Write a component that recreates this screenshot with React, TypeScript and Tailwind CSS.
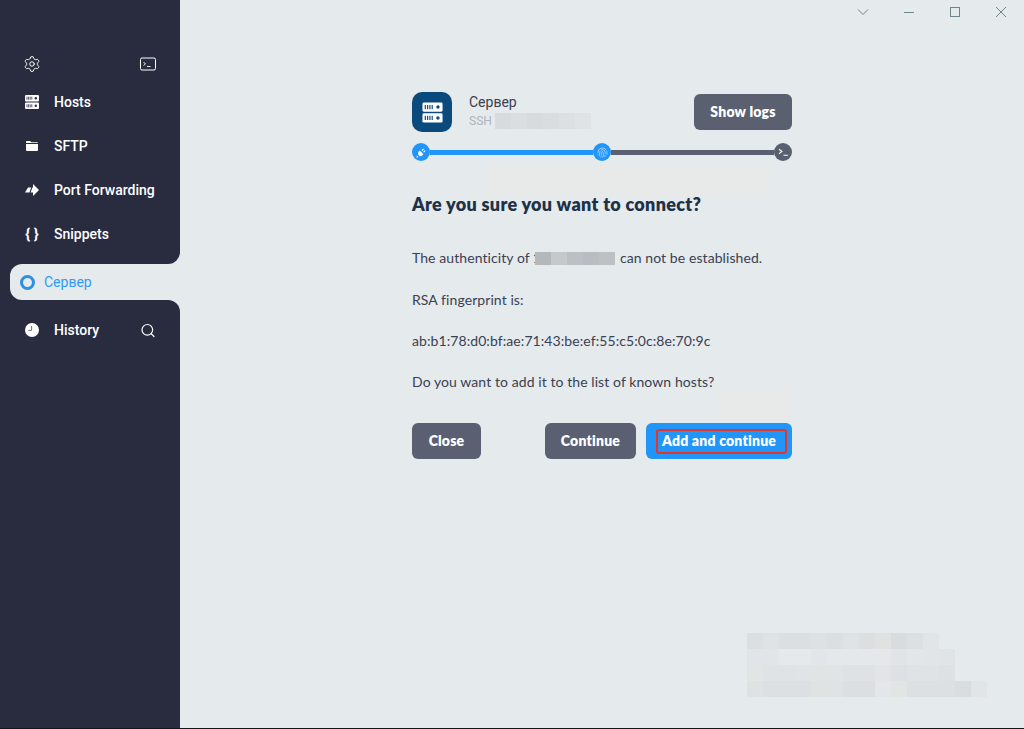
import { Fingerprint, Search, Settings } from "lucide-react";
import type { ReactNode } from "react";

const SIDEBAR_FONT = "font-['Roboto',sans-serif]";
const MAIN_FONT = "font-['Lato','Noto_Sans',sans-serif]";

// colours of the pixelated smudge in the lower right corner, one row per line
const smudge = [
  ["#dcdfe2", "#e0e3e5", "#dcdfe2", "#dcdfe2", "#dee1e3", "#dcdfe2", "#e0e3e5", "#dcdfdf", "#dfe2e1", "#d9dcdf", "#dde0e3", "#e2e5e8"],
  ["#e2e5e7", "#e2e5e7", "#e5e9eb", "#e5e9eb", "#e3e6e8", "#e5e8ea", "#e5e8ea", "#e5e8ea", "#e5e8ea", "#e1e4e6", "#e3e6e8", "#e2e5e7", "#e0e4e6"],
  ["#e1e5e3", "#e0e3e5", "#e0e3e5", "#e1e4e6", "#e1e4e5", "#e1e4e5", "#dfe2e4", "#dfe2e4", "#e2e4e5", "#dee1e3", "#e0e3e5", "#e0e3e5", "#dde1e4"],
  ["#dee2e2", "#dde0e2", "#dde0e2", "#dde0e2", "#dfe3e2", "#e0e3e4", "#dcdfe1", "#dcdfe2", "#e4e7e9", "#e1e6e4", "#dde0e2", "#dde0e2", "#dde0e2", "#dadde0", "#e2e5e8"],
];

// blurred address next to SSH and in the first paragraph
const hostBlur = ["#d8dbde", "#dbdee1", "#d8dbde", "#dadde0", "#dde0e3", "#e0e3e6"];
const addressBlur = ["#b4b7bb", "#c6c9cc", "#bcbfc3", "#b9bcc0", "#bec1c4"];

function ServerIcon({ size, fill, hole }: { size: number; fill: string; hole: string }) {
  return (
    <svg width={size} height={size} viewBox="0 0 16 16">
      <rect x="1" y="1" width="14" height="6.4" rx="1" fill={fill} />
      <rect x="1" y="8.6" width="14" height="6.4" rx="1" fill={fill} />
      <path d="M3 2.7v3M4.6 2.7v3M6.2 2.7v3M7.8 2.7v3M3 10.3v3M4.6 10.3v3M6.2 10.3v3M7.8 10.3v3" stroke={hole} strokeWidth="0.8" />
      <circle cx="11.8" cy="4.2" r="1.2" fill={hole} />
      <circle cx="11.8" cy="11.8" r="1.2" fill={hole} />
    </svg>
  );
}

function FolderIcon() {
  return (
    <svg width="12" height="10" viewBox="0 0 12 10" fill="white">
      <path d="M.8 0h3.4l1.2 1.3h5.8c.4 0 .8.3.8.8H0V.8C0 .4.4 0 .8 0z" />
      <path d="M0 3h12v6.2c0 .4-.4.8-.8.8H.8c-.4 0-.8-.4-.8-.8z" />
    </svg>
  );
}

function ForwardIcon() {
  return (
    <svg width="14" height="12" viewBox="0 0 14 12" fill="white">
      <path d="M8 0 14 6l-6 6V8.6H5.6L7.4 3.4H8z" />
      <path d="M3 3.4h3.2L4.4 8.6H0z" />
    </svg>
  );
}

function ClockIcon() {
  return (
    <svg width="14" height="14" viewBox="0 0 14 14">
      <circle cx="7" cy="7" r="7" fill="white" />
      <path d="M6.6 3v4.4H3.4" fill="none" stroke="#6d7080" strokeWidth="1" />
    </svg>
  );
}

function TerminalBox() {
  return (
    <svg width="16" height="14" viewBox="0 0 16 14" fill="none" stroke="white">
      <rect x="0.5" y="1" width="15" height="12" rx="1.5" strokeWidth="1" />
      <path d="M3.5 5 5.5 7l-2 1.5M7 9.5h3.5" strokeWidth="0.9" />
    </svg>
  );
}

function PlugIcon() {
  return (
    <svg width="11" height="11" viewBox="0 0 10 10" fill="white">
      <path d="M3.4 3.2 6.8 6.6 5.6 7.8C4.7 8.6 3.4 8.6 2.6 7.6 1.6 6.8 1.6 5.4 2.4 4.4z" />
      <path d="M1.8 8.2.6 9.4M5.4 3.2 6.8 1.8M6.9 4.7 8.3 3.3" stroke="white" strokeWidth="1" />
    </svg>
  );
}

function NavItem({ icon, label, right }: { icon: ReactNode; label: string; right?: ReactNode }) {
  return (
    <div className="flex h-11 items-center pl-[24px] text-sm font-medium text-white">
      <span className="mr-[14px] flex w-4 shrink-0 items-center justify-center">{icon}</span>
      <span className="flex-1">{label}</span>
      {right && <span className="mr-[24px] flex w-4 justify-center">{right}</span>}
    </div>
  );
}

function Sidebar() {
  return (
    <aside className={`flex w-[180px] shrink-0 flex-col ${SIDEBAR_FONT}`}>
      <div className="flex h-[264px] flex-col rounded-br-xl bg-[#292c3f] pt-[55px]">
        <div className="mb-[7px] flex items-center justify-between px-[23px]">
          <Settings size={18} strokeWidth={1.3} className="text-white" />
          <span className="mr-px">
            <TerminalBox />
          </span>
        </div>
        <NavItem icon={<ServerIcon size={16} fill="white" hole="#292c3f" />} label="Hosts" />
        <NavItem icon={<FolderIcon />} label="SFTP" />
        <NavItem icon={<ForwardIcon />} label="Port Forwarding" />
        <NavItem icon={<span className="text-[15px] leading-none font-bold whitespace-nowrap">{"{ }"}</span>} label="Snippets" />
      </div>
      <div className="bg-[#292c3f] pl-[10px]">
        <div className="flex h-9 items-center rounded-l-xl bg-[#e5eaed] pl-[10px] text-sm text-[#2e9bf5]">
          <span className="h-[15px] w-[15px] rounded-full border-[3px] border-[#2f8fe0]" />
          <span className="ml-[9px]">Сервер</span>
        </div>
      </div>
      <div className="flex-1 rounded-tr-xl bg-[#292c3f] pt-[8px]">
        <NavItem icon={<ClockIcon />} label="History" right={<Search size={17} strokeWidth={1.8} className="text-white" />} />
      </div>
    </aside>
  );
}

function WindowControls() {
  return (
    <div className="flex h-6 items-center justify-end pr-[17px] text-[#71858f]">
      <svg width="12" height="8" viewBox="0 0 12 8" fill="none" stroke="currentColor" className="mr-[35px]">
        <path d="M1 1.5 6 6.5l5-5" />
      </svg>
      <span className="mr-[36px] h-px w-[10px] bg-current" />
      <span className="mr-[35px] h-[10px] w-[10px] border border-current" />
      <svg width="12" height="12" viewBox="0 0 12 12" stroke="currentColor" fill="none">
        <path d="M1 1l10 10M11 1 1 11" />
      </svg>
    </div>
  );
}

function Blur({ colors, cell, height }: { colors: string[]; cell: number; height: number }) {
  return (
    <span className="inline-flex align-middle">
      {colors.map((c, i) => (
        <span key={i} style={{ background: c, width: cell, height }} />
      ))}
    </span>
  );
}

function Step({ children, done }: { children: ReactNode; done: boolean }) {
  return (
    <span className={`flex h-[18px] w-[18px] shrink-0 items-center justify-center rounded-full ${done ? "bg-[#2196f8]" : "bg-[#5a5f72]"}`}>
      {children}
    </span>
  );
}

function Button({ children, className }: { children: ReactNode; className: string }) {
  return (
    <button className={`flex h-9 items-center justify-center rounded-md text-sm font-extrabold tracking-[0.2px] text-white ${className}`}>
      {children}
    </button>
  );
}

function Dialog() {
  return (
    <div className={`relative mx-auto w-[380px] pt-[68px] text-sm tracking-[0.08px] text-[#3a3f52] ${MAIN_FONT}`}>
      <div className="flex h-10 items-start">
        <span className="flex h-10 w-10 items-center justify-center rounded-[10px] bg-[#0b4a7c]">
          <ServerIcon size={23} fill="white" hole="#0b4a7c" />
        </span>
        <div className={`ml-[17px] flex-1 tracking-normal ${SIDEBAR_FONT}`}>
          <div className="text-sm leading-5">Сервер</div>
          <div className="mt-px flex h-4 items-center text-xs text-[#aeb3bf]">
            SSH
            <span className="ml-[3px] flex">
              <Blur colors={hostBlur} cell={16} height={16} />
            </span>
          </div>
        </div>
        <Button className="w-[98px] self-center bg-[#5a6070]">Show logs</Button>
      </div>

      <div className="mt-[11px] flex items-center">
        <Step done>
          <PlugIcon />
        </Step>
        <span className="h-[5px] flex-1 bg-[#2196f8]" />
        <Step done>
          <Fingerprint size={11} strokeWidth={1.5} className="text-[#cfe6fb]" />
        </Step>
        <span className="h-[5px] flex-1 bg-[#5a5f72]" />
        <Step done={false}>
          <svg width="11" height="9" viewBox="0 0 10 8" fill="none" stroke="white" strokeWidth="1.1">
            <path d="M1 1l2.5 2L1 5M5 6.5h4" />
          </svg>
        </Step>
      </div>

      <h1 className="mt-[29px] text-lg leading-7 font-extrabold tracking-[0.3px] text-[#1d3147]">Are you sure you want to connect?</h1>

      <p className="mt-[28px] flex h-6 items-center whitespace-nowrap">
        The authenticity of
        <span className="mr-[5px] ml-[3px] flex items-center">
          <span className="text-sm leading-none">1</span>
          {/* the mosaic covers most of the first digit */}
          <span className="relative -ml-[6px] flex">
            <Blur colors={addressBlur} cell={16} height={13} />
          </span>
        </span>
        can not be established.
      </p>
      <p className="mt-[18px] h-6 leading-6">RSA fingerprint is:</p>
      <p className="mt-[17px] h-6 leading-6">ab:b1:78:d0:bf:ae:71:43:be:ef:55:c5:0c:8e:70:9c</p>
      <p className="mt-[17px] h-6 leading-6">Do you want to add it to the list of known hosts?</p>

      <div className="mt-[29px] flex items-center">
        <Button className="w-[69px] bg-[#5a5f72]">Close</Button>
        <Button className="ml-auto w-[91px] bg-[#5a5f72]">Continue</Button>
        <Button className="relative ml-[10px] w-[146px] bg-[#2196f8]">
          Add and continue
          <span className="absolute top-[6px] right-[5px] bottom-[5px] left-[10px] rounded-[3px] border-2 border-[#e5352b]" />
        </Button>
      </div>
    </div>
  );
}

export default function App() {
  return (
    <div className="flex h-[729px] w-[1024px] overflow-hidden border-b border-[#15161c] bg-[#e5eaed]">
      <Sidebar />
      <main className="relative flex-1">
        {/* faint warm patches left by the redaction */}
        <div className="absolute top-[165px] left-[305px] h-[30px] w-[285px] bg-[#e8e9e9]" />
        <div className="absolute top-[387px] left-[537px] h-[33px] w-[73px] bg-[#e8e9e9]" />
        <WindowControls />
        <Dialog />
        <div className="absolute top-[633px] left-[567px] flex flex-col">
          {smudge.map((row, r) => (
            <div key={r} className="flex">
              {row.map((c, i) => (
                <span key={i} className="h-4 w-4" style={{ background: c }} />
              ))}
            </div>
          ))}
        </div>
      </main>
    </div>
  );
}
